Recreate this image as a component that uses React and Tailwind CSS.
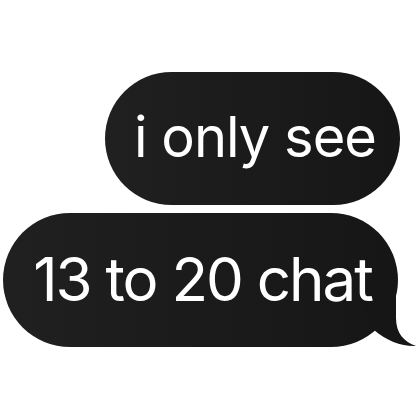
import React from 'react';

const Tail = () => (
  <svg className="absolute right-[-20px] bottom-[-1px]" width="80" height="80" viewBox="0 0 80 80">
    <path d="M58 8 L58 50 C58 65 66 74 78 78 C66 79 48 73 36 62 L18 20 Z" fill="#161616" />
  </svg>
);

export default function App() {
  return (
    <div className="w-[420px] h-[420px] bg-white flex flex-col items-end pt-[72px] gap-2" style={{ fontFamily: 'Inter, "Noto Sans", sans-serif' }}>
      <div className="mr-[20px] w-[295px] h-[133px] rounded-full bg-gradient-to-r from-[#202020] to-[#161616] flex items-center justify-center pl-[5px] pb-[4px]">
        <span className="text-white text-[56px] leading-none tracking-[-1px]">i only see</span>
      </div>
      <div className="relative mr-[22px] w-[395px] h-[134px] rounded-full bg-gradient-to-r from-[#202020] to-[#161616] flex items-center justify-center pl-[4px] pb-[3px]">
        <Tail />
        <span className="relative text-white text-[60px] leading-none tracking-[-2px]">13 to 20 chat</span>
      </div>
    </div>
  );
}
